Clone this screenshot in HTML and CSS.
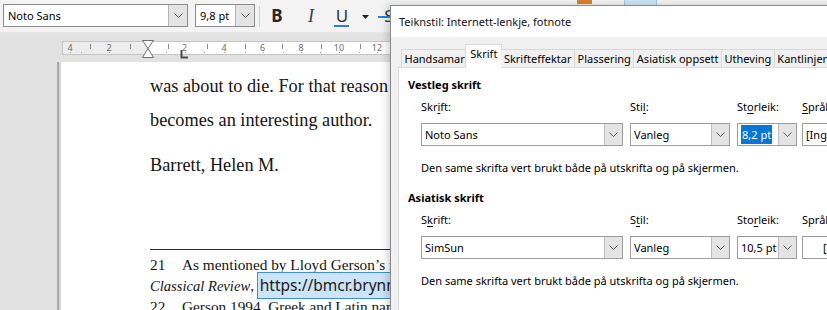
FILE: index.html
```html
<!DOCTYPE html>
<html lang="nn">
<head>
<meta charset="utf-8">
<title>Teiknstil</title>
<link rel="stylesheet" href="styles.css">
</head>
<body>
<div class="app">
  <div class="toolbar">
    <div class="combo tb-font"><span class="combo-text">Noto Sans</span><span class="combo-btn"><svg width="9" height="5" viewBox="0 0 9 5"><polyline points="0.5,0.5 4.5,4.5 8.5,0.5" fill="none" stroke="#555" stroke-width="1"/></svg></span></div>
    <div class="combo tb-size"><span class="combo-text">9,8 pt</span><span class="combo-btn"><svg width="9" height="5" viewBox="0 0 9 5"><polyline points="0.5,0.5 4.5,4.5 8.5,0.5" fill="none" stroke="#555" stroke-width="1"/></svg></span></div>
    <div class="tb-sep"></div>
    <span class="tb-btn tb-bold">B</span>
    <span class="tb-btn tb-italic">I</span>
    <span class="tb-btn tb-under">U</span>
    <span class="tb-arrow"><svg width="7" height="4" viewBox="0 0 7 4"><polygon points="0,0 7,0 3.5,4" fill="#222"/></svg></span>
    <span class="tb-btn tb-strike">S</span>
    <span class="tb-hidden-orange"></span>
    <span class="tb-hidden-blue"></span>
  </div>

  <div class="docarea">
    <div class="ruler">
      <svg width="340" height="21" viewBox="0 0 340 21">
        <rect x="0.5" y="3.5" width="339" height="13" fill="#ffffff" stroke="#c4c4c4"/>
        <rect x="1" y="4" width="85" height="12" fill="#ededed"/>
        <g fill="#6b6b6b" font-family="Noto Sans, sans-serif" font-size="9" text-anchor="middle">
          <text x="8" y="12.5">4</text>
          <text x="47" y="12.5">2</text>
          <text x="122.5" y="12.5">2</text>
          <text x="162" y="12.5">4</text>
          <text x="200.5" y="12.5">6</text>
          <text x="239" y="12.5">8</text>
          <text x="277" y="12.5">10</text>
          <text x="315" y="12.5">12</text>
        </g>
        <g stroke="#8a8a8a" stroke-width="1">
          <line x1="28.5" y1="6" x2="28.5" y2="11"/>
          <line x1="68.5" y1="6" x2="68.5" y2="11"/>
          <line x1="106.5" y1="6" x2="106.5" y2="11"/>
          <line x1="145.5" y1="6" x2="145.5" y2="11"/>
          <line x1="183.5" y1="6" x2="183.5" y2="11"/>
          <line x1="220.5" y1="6" x2="220.5" y2="11"/>
          <line x1="259.5" y1="6" x2="259.5" y2="11"/>
          <line x1="298.5" y1="6" x2="298.5" y2="11"/>
        </g>
        <g fill="#9a9a9a">
          <rect x="8" y="14" width="1" height="1"/>
          <rect x="19" y="14" width="1" height="1"/>
          <rect x="47" y="14" width="1" height="1"/>
          <rect x="104" y="14" width="1" height="1"/>
          <rect x="123" y="14" width="1" height="1"/>
          <rect x="142" y="14" width="1" height="1"/>
          <rect x="162" y="14" width="1" height="1"/>
          <rect x="183" y="14" width="1" height="1"/>
          <rect x="201" y="14" width="1" height="1"/>
          <rect x="221" y="14" width="1" height="1"/>
          <rect x="239" y="14" width="1" height="1"/>
          <rect x="258" y="14" width="1" height="1"/>
          <rect x="277" y="14" width="1" height="1"/>
          <rect x="297" y="14" width="1" height="1"/>
          <rect x="315" y="14" width="1" height="1"/>
        </g>
        <polygon points="80.5,2.5 91.5,2.5 86,10.5" fill="#fff" stroke="#6f6f6f"/>
        <polygon points="86,10.5 80.5,19.5 91.5,19.5" fill="#fff" stroke="#6f6f6f"/>
        <polyline points="119.5,12 119.5,19.5 126,19.5" fill="none" stroke="#4a4a4a" stroke-width="2"/>
      </svg>
    </div>
    <div class="page">
      <p class="body-text">was about to die. For that reason he<br>becomes an interesting author.</p>
      <p class="body-text para2">Barrett, Helen M.</p>
      <div class="footnotes">
        <p class="fn"><span class="fn-num">21</span>As mentioned by Lloyd Gerson’s review in <em>Bryn Mawr</em></p>
        <p class="fn"><em class="swash">Classical Review</em>, <span class="link">https://bmcr.brynmawr.edu/</span></p>
        <p class="fn"><span class="fn-num">22</span>Gerson 1994, Greek and Latin names</p>
      </div>
    </div>
  </div>

  <div class="dialog">
    <div class="titlebar">Teiknstil: Internett-lenkje, fotnote</div>
    <div class="tabs">
      <span class="tab">Handsamar</span>
      <span class="tab tab-active">Skrift</span>
      <span class="tab">Skrifteffektar</span>
      <span class="tab">Plassering</span>
      <span class="tab">Asiatisk oppsett</span>
      <span class="tab">Utheving</span>
      <span class="tab">Kantlinjer</span>
    </div>
    <div class="panel">
      <div class="heading">Vestleg skrift</div>
      <div class="fields">
        <span class="label">Skr<u>i</u>ft:</span>
        <span class="label">Sti<u>l</u>:</span>
        <span class="label">St<u>o</u>rleik:</span>
        <span class="label"><u>S</u>pråk</span>
        <div class="dcombo w-font"><span class="dcombo-text">Noto Sans</span><span class="dcombo-btn"><svg width="9" height="5" viewBox="0 0 9 5"><polyline points="0.5,0.5 4.5,4.5 8.5,0.5" fill="none" stroke="#555" stroke-width="1"/></svg></span></div>
        <div class="dcombo w-style"><span class="dcombo-text">Vanleg</span><span class="dcombo-btn"><svg width="9" height="5" viewBox="0 0 9 5"><polyline points="0.5,0.5 4.5,4.5 8.5,0.5" fill="none" stroke="#555" stroke-width="1"/></svg></span></div>
        <div class="dcombo w-size"><span class="dcombo-text"><span class="sel">8,2 pt</span></span><span class="dcombo-btn"><svg width="9" height="5" viewBox="0 0 9 5"><polyline points="0.5,0.5 4.5,4.5 8.5,0.5" fill="none" stroke="#555" stroke-width="1"/></svg></span></div>
        <div class="dcombo w-lang"><span class="dcombo-text">[Ingen]</span></div>
      </div>
      <div class="note">Den same skrifta vert brukt både på utskrifta og på skjermen.</div>

      <div class="heading heading2">Asiatisk skrift</div>
      <div class="fields">
        <span class="label">S<u>k</u>rift:</span>
        <span class="label">S<u>t</u>il:</span>
        <span class="label">Sto<u>r</u>leik:</span>
        <span class="label">Språk</span>
        <div class="dcombo w-font"><span class="dcombo-text">SimSun</span><span class="dcombo-btn"><svg width="9" height="5" viewBox="0 0 9 5"><polyline points="0.5,0.5 4.5,4.5 8.5,0.5" fill="none" stroke="#555" stroke-width="1"/></svg></span></div>
        <div class="dcombo w-style"><span class="dcombo-text">Vanleg</span><span class="dcombo-btn"><svg width="9" height="5" viewBox="0 0 9 5"><polyline points="0.5,0.5 4.5,4.5 8.5,0.5" fill="none" stroke="#555" stroke-width="1"/></svg></span></div>
        <div class="dcombo w-size"><span class="dcombo-text">10,5 pt</span><span class="dcombo-btn"><svg width="9" height="5" viewBox="0 0 9 5"><polyline points="0.5,0.5 4.5,4.5 8.5,0.5" fill="none" stroke="#555" stroke-width="1"/></svg></span></div>
        <div class="dcombo w-lang"><span class="dcombo-text lang-asian">[Ingen]</span></div>
      </div>
      <div class="note">Den same skrifta vert brukt både på utskrifta og på skjermen.</div>
    </div>
  </div>
</div>
</body>
</html>
```
FILE: styles.css
```css
html, body {
  margin: 0;
  padding: 0;
}
body {
  width: 827px;
  height: 310px;
  overflow: hidden;
  font-family: "Noto Sans", "Open Sans", sans-serif;
}
.app {
  position: relative;
  width: 827px;
  height: 310px;
  overflow: hidden;
  background: #e2e2e2;
}

/* ---------- toolbar ---------- */
.toolbar {
  height: 33px;
  box-sizing: border-box;
  background: #f3f3f3;
  border-bottom: 1px solid #e8e8e8;
  display: flex;
  align-items: flex-start;
  padding: 4px 0 0 3px;
}
.combo {
  display: flex;
  height: 23px;
  box-sizing: border-box;
  border: 1px solid #8c8c8c;
  background: #fff;
}
.combo-text {
  flex: 1;
  font-size: 11px;
  line-height: 21px;
  padding-left: 4px;
  color: #000;
  white-space: nowrap;
  overflow: hidden;
}
.combo-btn {
  width: 18px;
  border-left: 1px solid #b4b4b4;
  background: #e4e4e4;
  display: flex;
  align-items: center;
  justify-content: center;
}
.tb-font { width: 185px; }
.tb-size { width: 60px; margin-left: 7px; }
.tb-sep {
  width: 1px;
  height: 21px;
  background: #d2d2d2;
  margin: 2px 0 0 4px;
}
.tb-btn {
  width: 24px;
  height: 24px;
  text-align: center;
  line-height: 24px;
}
.tb-bold {
  margin-left: 5px;
  font-family: "Noto Sans", sans-serif;
  font-weight: bold;
  font-size: 17px;
  color: #262626;
}
.tb-italic {
  margin-left: 10px;
  font-family: "Liberation Serif", serif;
  font-style: italic;
  font-size: 18px;
  color: #3c3c3c;
}
.tb-under {
  margin-left: 7px;
  font-family: "Noto Sans", sans-serif;
  font-size: 17px;
  color: #333;
  position: relative;
}
.tb-under::after {
  content: "";
  position: absolute;
  left: 4px;
  right: 5px;
  top: 21px;
  height: 2px;
  background: #2b7fd1;
}
.tb-arrow {
  width: 12px;
  margin-left: 5px;
  height: 24px;
  display: flex;
  align-items: center;
  justify-content: center;
  padding-top: 2px;
  box-sizing: border-box;
}
.tb-strike {
  margin-left: 6px;
  font-size: 17px;
  color: #333;
  position: relative;
}
.tb-strike::after {
  content: "";
  position: absolute;
  left: 1px;
  right: 1px;
  top: 12px;
  height: 2px;
  background: #2b7fd1;
}
.tb-hidden-orange {
  width: 15px;
  height: 4px;
  margin: -4px 0 0 176px;
  background: #d9822b;
}
.tb-hidden-blue {
  width: 31px;
  height: 5px;
  margin: -4px 0 0 32px;
  background: #cce4f7;
  border: 1px solid #99c9ef;
  border-top: none;
}

/* ---------- document ---------- */
.docarea {
  padding-top: 5px;
}
.ruler {
  margin-left: 62px;
  height: 21px;
  line-height: 0;
}
.ruler svg {
  display: block;
}
.page {
  margin: 3px 0 0 57px;
  height: 300px;
  background: #fff;
  border-left: 2px solid #a9a9a9;
  box-shadow: inset 2px 0 0 #d6d6d6;
  padding: 7px 0 0 91px;
  box-sizing: border-box;
  color: #141414;
  white-space: nowrap;
}
.body-text {
  margin: 0;
  font-family: "Liberation Serif", "Times New Roman", serif;
  font-size: 18.3px;
  line-height: 34px;
}
.para2 {
  margin-top: 11px;
}
.footnotes {
  margin-top: 67px;
  border-top: 1px solid #2c2848;
  padding-top: 5px;
  width: 400px;
}
.fn {
  margin: 0;
  height: 20.8px;
  font-family: "Liberation Serif", "Times New Roman", serif;
  font-size: 15.3px;
  line-height: 20.8px;
}
.fn-num {
  display: inline-block;
  width: 32px;
}
.swash {
  font-style: italic;
  font-size: 14.6px;
}
.link {
  font-family: "Noto Sans", sans-serif;
  font-size: 15.5px;
  line-height: 18px;
  background: #cce4f7;
  outline: 1px solid #3d8ed6;
  padding: 1px 0 2px 2px;
  color: #1a1a1a;
}

/* ---------- dialog ---------- */
.dialog {
  position: absolute;
  left: 390px;
  top: 5px;
  width: 460px;
  height: 320px;
  background: #f0f0f0;
  border: 1px solid #8a8a8a;
  box-shadow: -3px 0 7px rgba(0, 0, 0, 0.16);
  font-family: "Noto Sans", "Open Sans", sans-serif;
  font-size: 11px;
  color: #000;
}
.titlebar {
  height: 31px;
  background: #fff;
  display: flex;
  align-items: center;
  padding-left: 8px;
  font-size: 11px;
  color: #111;
}
.tabs {
  display: flex;
  align-items: flex-end;
  padding: 8px 0 0 10px;
  height: 23px;
  position: relative;
  z-index: 1;
  margin-bottom: -1px;
}
.tab {
  height: 19px;
  box-sizing: border-box;
  border: 1px solid #d9d9d9;
  border-right: none;
  background: #f0f0f0;
  line-height: 17px;
  padding: 0 2.5px;
  white-space: nowrap;
}
.tab-active {
  height: 24px;
  background: #fff;
  border-bottom: none;
  border-right: 1px solid #d9d9d9;
  margin: 0 -1px 0 -2px;
  padding: 0 4px 0 4px;
  line-height: 18px;
}
.tab-active + .tab {
  border-left: none;
}
.panel {
  margin-left: 7px;
  background: #fff;
  border: 1px solid #d9d9d9;
  height: 300px;
  padding: 9px 0 0 9px;
  box-sizing: border-box;
}
.heading {
  font-weight: bold;
  line-height: 16px;
}
.heading2 {
  margin-top: 14px;
}
.fields {
  display: grid;
  grid-template-columns: 209px 107px 65px 100px;
  margin: 6px 0 0 13px;
}
.label {
  line-height: 16px;
  white-space: nowrap;
}
.label u {
  text-underline-offset: 2px;
}
.dcombo {
  margin-top: 8px;
  height: 23px;
  box-sizing: border-box;
  border: 1px solid #9c9c9c;
  background: #fff;
  display: flex;
}
.dcombo-text {
  flex: 1;
  line-height: 21px;
  padding-left: 3px;
  white-space: nowrap;
  overflow: hidden;
}
.dcombo-btn {
  width: 17px;
  background: #e4e4e4;
  border-left: 1px solid #bcbcbc;
  display: flex;
  align-items: center;
  justify-content: center;
}
.w-font { width: 202px; }
.w-style { width: 100px; }
.w-size { width: 60px; }
.w-lang { width: 100px; }
.sel {
  background: #0078d7;
  color: #fff;
  padding: 2px 1px;
}
.lang-asian {
  padding-left: 20px;
}
.note {
  margin: 14px 0 0 13px;
  line-height: 16px;
  white-space: nowrap;
}
```
